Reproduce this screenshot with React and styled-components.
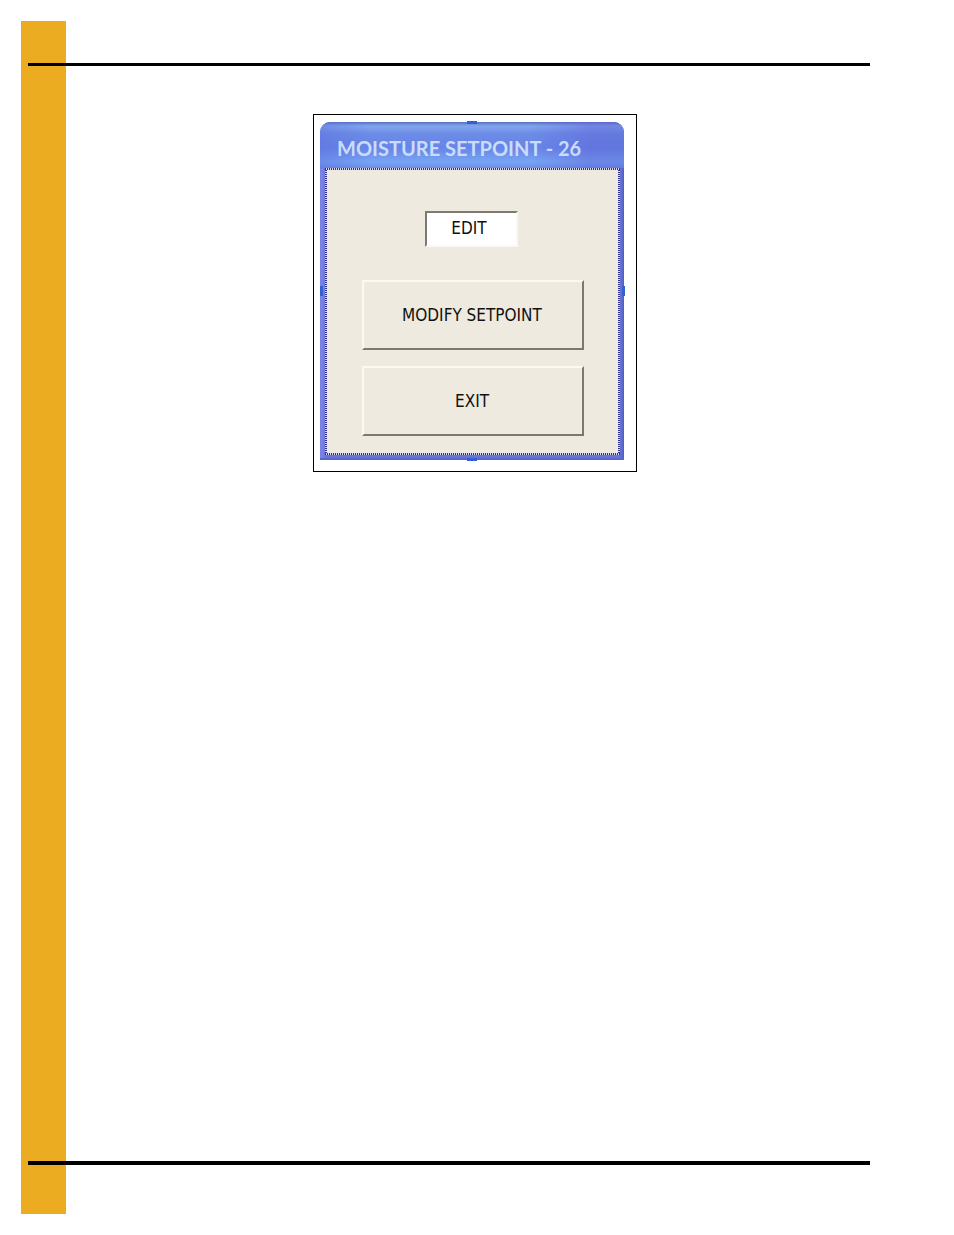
import { useState } from "react";
import styled, { createGlobalStyle } from "styled-components";

const GlobalStyle = createGlobalStyle`
    * {
        box-sizing: border-box;
    }

    body {
        margin: 0;
        background-color: #ffffff;
        font-family: "DejaVu Sans Condensed", "DejaVu Sans", sans-serif;
    }
`

const Page = styled.div`
    min-height: 100vh;
    padding: 21px 84px 21px 21px;
    display: grid;
    grid-template-columns: 7px 38px 1fr;
`

const SideBar = styled.aside`
    grid-column: 1 / 3;
    grid-row: 1;
    background-color: #ebac22;
`

const Sheet = styled.main`
    grid-column: 2 / 4;
    grid-row: 1;
    padding: 42px 0 49px;
    display: flex;
    flex-direction: column;
`

const Rule = styled.hr`
    width: 100%;
    height: ${({ $height }) => $height}px;
    margin: 0;
    border: 0;
    background-color: #000000;
`

const Body = styled.div`
    flex: 1;
    padding: 48px 0 48px 52px;
`

const Figure = styled.figure`
    width: fit-content;
    margin: 0 auto;
    padding: 7px 12px 11px 6px;
    border: 1px solid #000000;
`

const Dialog = styled.section`
    position: relative;
    width: 304px;
    padding: 0 4px 5px 5px;
    border-radius: 10px 10px 0 0;
    background: linear-gradient(90deg, #7882e2 0, #7882e2 3px, #6a74d8 5px, #6a74d8 299px, #5f6dce 302px, #4d5cba 100%);
    box-shadow: inset 0 -2px 0 #5a66c8;
`

const TitleBar = styled.header`
    height: 46px;
    margin: 0 -4px 0 -5px;
    padding: 6px 17px 0;
    border-radius: 10px 10px 0 0;
    display: flex;
    align-items: center;
    background:
        linear-gradient(90deg, #5b6ce070 0, #6f8ff000 50px, #6f8ff000 210px, #5c60d870 270px, #5864d070 100%),
        linear-gradient(180deg, #5a6fc0 0, #83a6ee 4px, #6c8ce6 12px, #6785e7 26px, #78a5f3 40px, #6c8fe8 100%);
`

const Title = styled.h1`
    margin: 0;
    color: #c9dcfb;
    font-family: Lato, sans-serif;
    font-size: 20px;
    font-weight: 700;
    line-height: 28px;
    white-space: nowrap;
`

/* dotted selection outline, two pixels thick on every side */
const Client = styled.div`
    padding: 43px 36px 19px 37px;
    display: flex;
    flex-direction: column;
    align-items: center;
    background:
        repeating-linear-gradient(90deg, #30308c 0 1px, #d5d8f6 1px 2px) top / 100% 2px no-repeat,
        repeating-linear-gradient(90deg, #30308c 0 1px, #d5d8f6 1px 2px) bottom / 100% 2px no-repeat,
        repeating-linear-gradient(180deg, #30308c 0 1px, #d5d8f6 1px 2px) left / 2px 100% no-repeat,
        repeating-linear-gradient(180deg, #30308c 0 1px, #d5d8f6 1px 2px) right / 2px 100% no-repeat,
        #eeeadf;
`

const ModeField = styled.input`
    width: 93px;
    height: 36px;
    margin: 0 4px 33px 0;
    padding: 0 4px 2px 0;
    border: 2px solid;
    border-color: #7d796f #faf8f2 #faf8f2 #7d796f;
    border-radius: 0;
    background-color: #ffffff;
    color: #111111;
    font-family: inherit;
    font-size: 17px;
    text-align: center;
    outline: none;
`

const DialogButton = styled.button`
    width: 100%;
    height: 70px;
    padding: 0 2px 0 0;
    border: 2px solid;
    border-color: #fbf9f2 #7d786c #7d786c #fbf9f2;
    border-radius: 0;
    background-color: #eeeadf;
    color: #111111;
    font-family: inherit;
    font-size: 17px;
    white-space: nowrap;

    & + & {
        margin-top: 16px;
    }

    &:active {
        border-color: #7d786c #fbf9f2 #fbf9f2 #7d786c;
    }
`

const handleSides = {
    top: "top: -1px; left: calc(50% - 5px);",
    bottom: "bottom: -1px; left: calc(50% - 5px);",
    left: "left: 0; top: calc(50% - 5px);",
    right: "right: -1px; top: calc(50% - 5px);",
}

const Handle = styled.span`
    position: absolute;
    width: ${({ $side }) => ($side === "top" || $side === "bottom" ? 10 : 3)}px;
    height: ${({ $side }) => ($side === "top" || $side === "bottom" ? 3 : 10)}px;
    background-color: #3560d2;
    ${({ $side }) => handleSides[$side]}
`

const SetpointDialog = () => {
    const [mode, setMode] = useState("EDIT");

    return (
        <Dialog aria-labelledby="dialog-title">
            <TitleBar>
                <Title id="dialog-title">MOISTURE SETPOINT - 26</Title>
            </TitleBar>
            <Client>
                <ModeField aria-label="Mode" value={mode} onChange={(e) => setMode(e.target.value)} />
                <DialogButton type="button">MODIFY SETPOINT</DialogButton>
                <DialogButton type="button">EXIT</DialogButton>
            </Client>
            {Object.keys(handleSides).map((side) => (
                <Handle key={side} $side={side} />
            ))}
        </Dialog>
    )
}

const App = () => {
    return (
        <>
            <GlobalStyle />
            <Page>
                <SideBar />
                <Sheet>
                    <Rule $height={3} />
                    <Body>
                        <Figure>
                            <SetpointDialog />
                        </Figure>
                    </Body>
                    <Rule $height={4} />
                </Sheet>
            </Page>
        </>
    )
}

export default App;
